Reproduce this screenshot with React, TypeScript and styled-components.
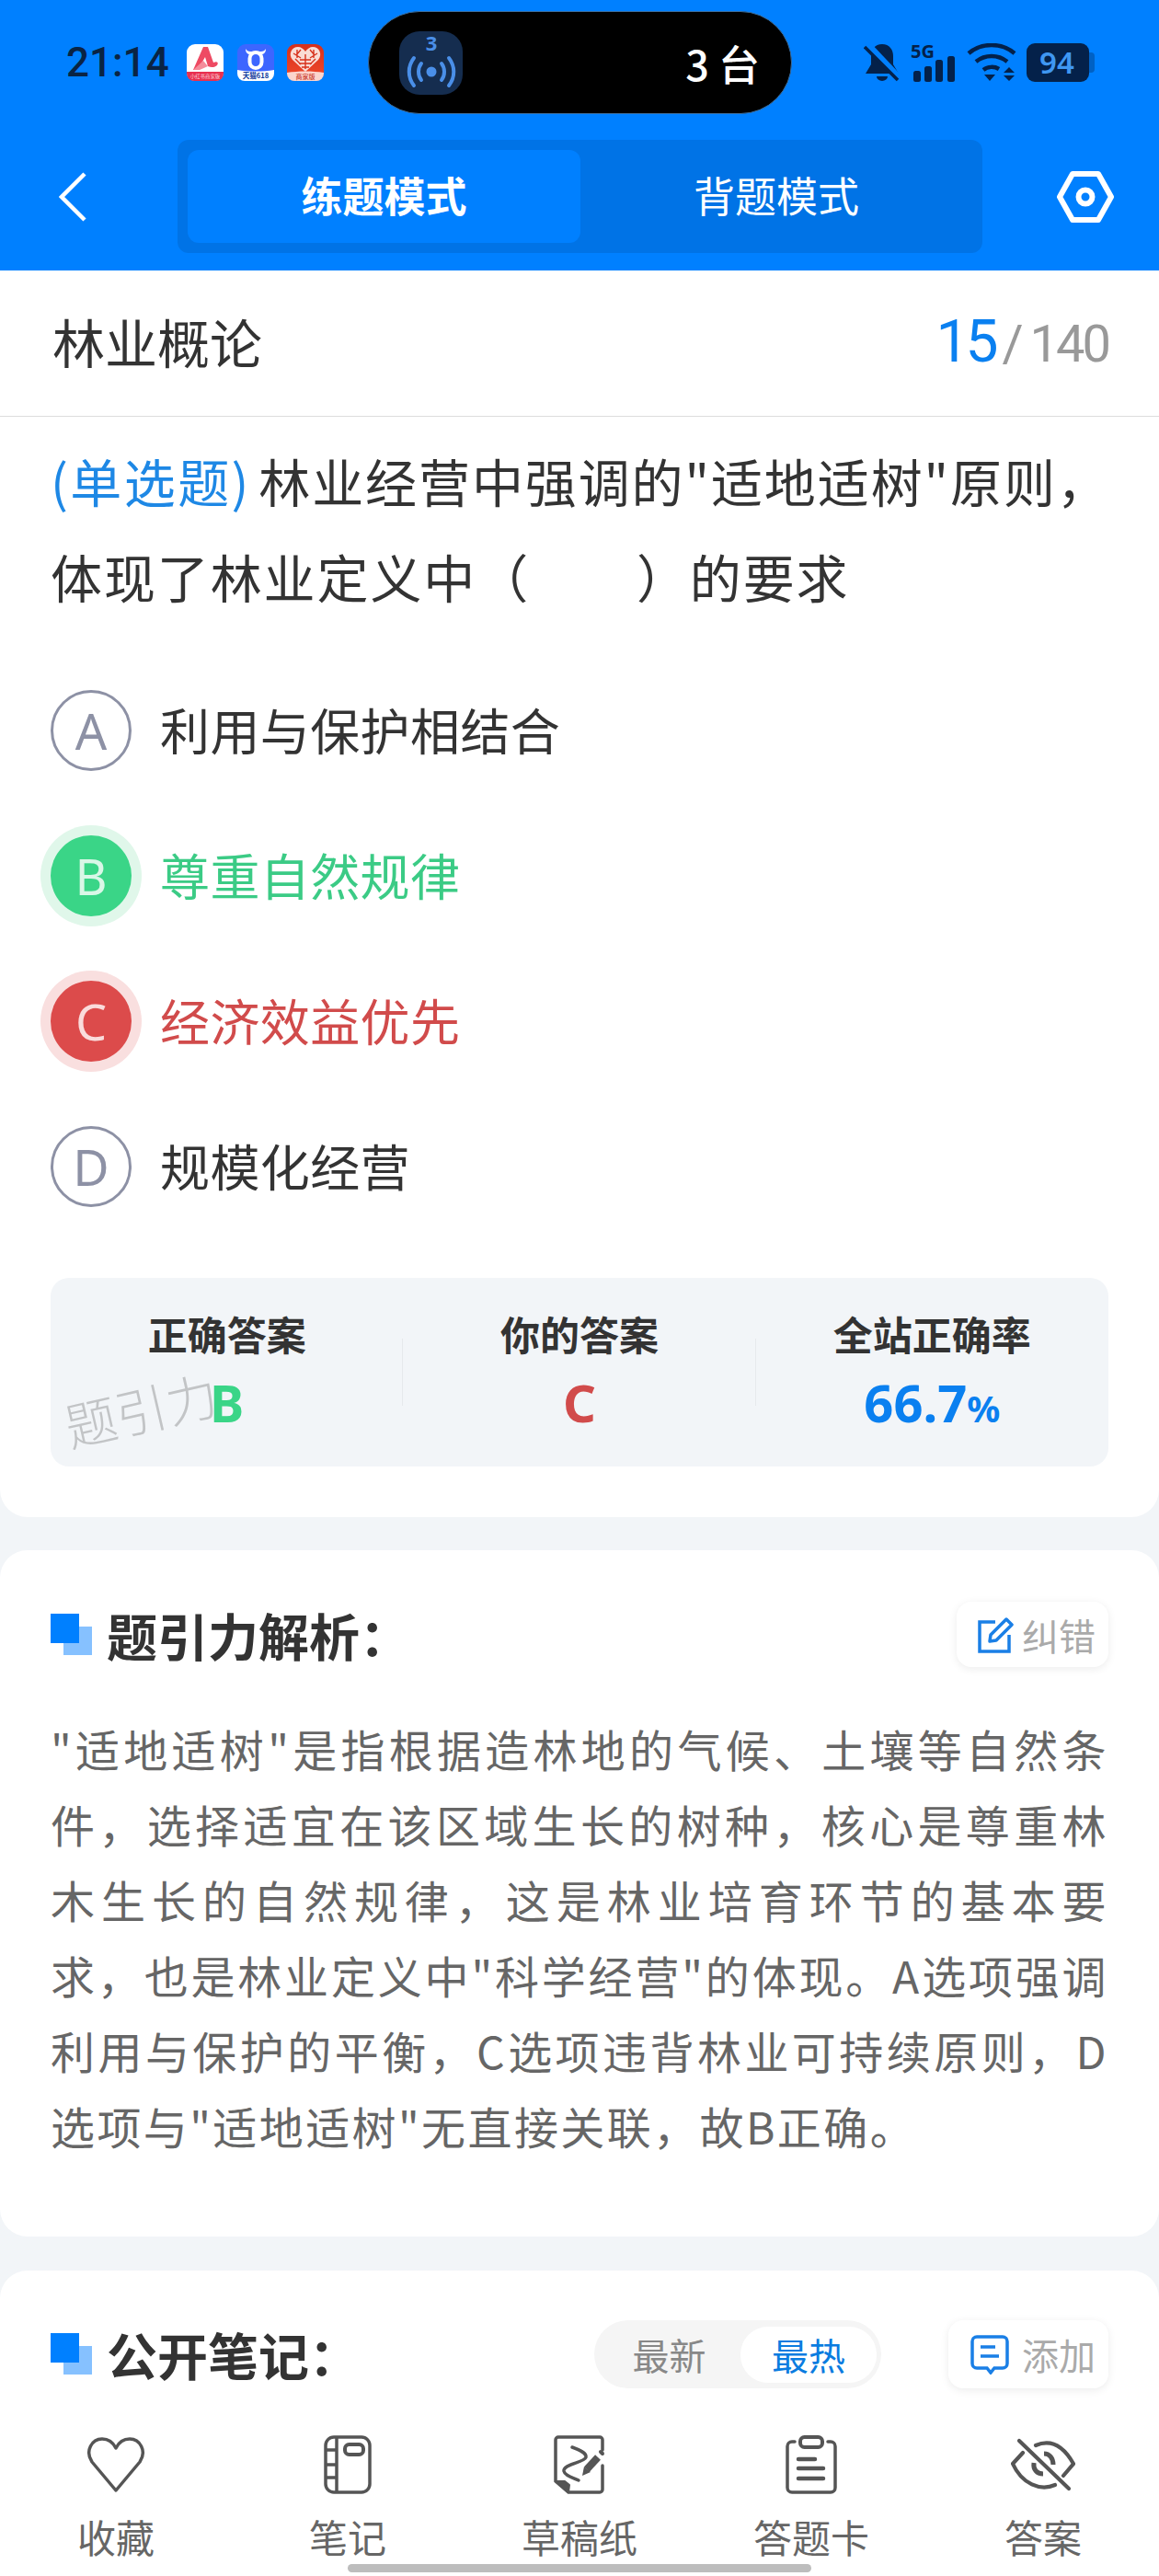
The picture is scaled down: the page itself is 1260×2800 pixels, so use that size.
import React from 'react'
import styled, { createGlobalStyle } from 'styled-components'

const GlobalStyle = createGlobalStyle`
  html, body {
    margin: 0;
    padding: 0;
    background: #f2f5f8;
    font-family: "Noto Sans CJK SC", "Noto Sans", sans-serif;
  }
  * { box-sizing: border-box; }
`

const Phone = styled.div`
  position: relative;
  width: 1260px;
  height: 2800px;
  display: flex;
  flex-direction: column;
  overflow: hidden;
  background: #f2f5f8;
`

const Header = styled.header`
  height: 294px;
  flex: none;
  background: #0080ff;
  display: flex;
  flex-direction: column;
`

const StatusBar = styled.div`
  height: 152px;
  padding: 12px 70px 28px 72px;
  display: flex;
  align-items: center;
  color: #0a2444;
`

const Clock = styled.span`
  width: 131px;
  font-size: 44px;
  font-weight: 500;
  font-family: Roboto, "Noto Sans", sans-serif;
`

const AppIcons = styled.div`
  width: 197px;
  display: flex;
  gap: 14.5px;
`

const Island = styled.div`
  width: 461px;
  height: 112px;
  border-radius: 56px;
  background: #000;
  border: 1px solid #3d6f9f;
  padding: 0 34px 0 33px;
  display: flex;
  align-items: center;
  justify-content: space-between;
  color: #fff;
  font-size: 45px;
  font-weight: 500;
`

const IslandBadge = styled.div`
  width: 69px;
  height: 69px;
  border-radius: 22px;
  background: #152d4f;
  display: flex;
  align-items: center;
  justify-content: center;
`

const StatusIcons = styled.div`
  margin-left: auto;
  display: flex;
  align-items: center;
  gap: 11px;
`

const Battery = styled.div`
  width: 74px;
  height: 42px;
  display: flex;
  align-items: center;
`

const BatteryBody = styled.div`
  width: 68px;
  height: 42px;
  border-radius: 9px;
  background: #04214a;
  color: #3f97f2;
  font-size: 33px;
  font-weight: 600;
  line-height: 42px;
  padding-left: 14px;
  font-family: "Noto Sans", sans-serif;
`

const BatteryTip = styled.div`
  width: 6px;
  height: 22px;
  background: #0061c4;
  border-radius: 0 4px 4px 0;
`

const NavBar = styled.div`
  height: 123px;
  padding: 0 49px 0 64px;
  display: flex;
  align-items: center;
`

const ModeSwitch = styled.div`
  width: 875px;
  height: 123px;
  margin: 0 auto 0 99px;
  padding: 11px;
  border-radius: 12px;
  background: #0073e6;
  display: flex;
`

const ModeTab = styled.div<{ $active?: boolean }>`
  width: ${p => (p.$active ? '427px' : '426px')};
  border-radius: 12px;
  background: ${p => (p.$active ? '#0080ff' : 'transparent')};
  color: #fff;
  font-size: 45px;
  font-weight: ${p => (p.$active ? 700 : 400)};
  display: flex;
  align-items: center;
  justify-content: center;
  padding-bottom: 4px;
`

const Card = styled.section<{ $top?: boolean }>`
  background: #fff;
  border-radius: ${p => (p.$top ? '0 0 30px 30px' : '30px')};
  flex: none;
`

const TitleRow = styled.div`
  height: 159px;
  padding: 0 55px 0 57px;
  border-bottom: 1px solid #dcdcdc;
  display: flex;
  align-items: center;
  justify-content: space-between;
`

const Subject = styled.h1`
  margin: 0 0 6px;
  font-size: 57px;
  font-weight: 400;
  color: #333;
`

const Progress = styled.div`
  display: flex;
  align-items: baseline;
  color: #999;
  font-size: 56px;
  letter-spacing: -3px;
  font-family: Roboto, "Noto Sans", sans-serif;
  margin-bottom: 4px;
`

const ProgressNow = styled.span`
  color: #0a80f0;
  font-size: 64px;
  letter-spacing: -4px;
  margin-right: 8px;
`

const ProgressSlash = styled.span`
  margin-right: 10px;
`

const QuestionBody = styled.div`
  padding: 17px 55px 55px;
`

const QuestionText = styled.p`
  margin: 0 0 72px;
  font-size: 56px;
  line-height: 104px;
  color: #333;
  letter-spacing: 1.9px;
  word-spacing: -6px;
  white-space: nowrap;
`

const QuestionType = styled.span`
  color: #1e88e5;
  letter-spacing: 2.4px;
`

const Options = styled.div`
  display: flex;
  flex-direction: column;
  gap: 70px;
  margin-bottom: 77px;
`

type Tone = 'plain' | 'right' | 'wrong'

const toneColor: Record<Tone, string> = {
  plain: '#333',
  right: '#3bcb85',
  wrong: '#d14b4b',
}

const OptionRow = styled.div<{ $tone: Tone }>`
  height: 88px;
  display: flex;
  align-items: center;
  gap: 31px;
  font-size: 54px;
  color: ${p => toneColor[p.$tone]};
`

const OptionText = styled.span`
  margin-top: -4px;
  letter-spacing: 0.4px;
`

const OptionMark = styled.div<{ $tone: Tone }>`
  width: 88px;
  height: 88px;
  flex: none;
  border-radius: 50%;
  font-size: 54px;
  font-family: "Noto Sans", sans-serif;
  display: flex;
  align-items: center;
  justify-content: center;
  color: ${p => (p.$tone === 'plain' ? '#8d91a5' : p.$tone === 'right' ? '#d9f7e7' : '#fadcdc')};
  background: ${p => (p.$tone === 'plain' ? '#fff' : p.$tone === 'right' ? '#3ad587' : '#dc4b4b')};
  border: ${p => (p.$tone === 'plain' ? '3px solid #8d91a5' : 'none')};
  box-shadow: ${p =>
    p.$tone === 'right' ? '0 0 0 11px #e0f7ea' : p.$tone === 'wrong' ? '0 0 0 11px #f9dfdf' : 'none'};
`

const Stats = styled.div`
  position: relative;
  height: 205px;
  border-radius: 20px;
  background: #f2f5f8;
  display: grid;
  grid-template-columns: repeat(3, 1fr);
`

const StatCell = styled.div<{ $divider?: boolean }>`
  position: relative;
  display: flex;
  flex-direction: column;
  align-items: center;
  padding-top: 30px;

  ${p =>
    p.$divider &&
    `&::after {
      content: '';
      position: absolute;
      right: 0;
      top: 66px;
      width: 1px;
      height: 73px;
      background: #e6e9ec;
    }`}
`

const StatLabel = styled.div`
  font-size: 43px;
  line-height: 60px;
  font-weight: 700;
  color: #333;
`

const StatValue = styled.div<{ $color: string }>`
  margin-top: 12px;
  font-size: 56px;
  line-height: 66px;
  font-weight: 700;
  font-family: "Noto Sans", sans-serif;
  color: ${p => p.$color};
`

const StatUnit = styled.span`
  font-size: 40px;
`

const Watermark = styled.div`
  position: absolute;
  left: 14px;
  top: 112px;
  font-size: 56px;
  font-weight: 300;
  line-height: 60px;
  color: #c2c4c6;
  transform: rotate(-13deg);
  white-space: nowrap;
`

const SectionCard = styled(Card)`
  margin-top: 36px;
  padding: 56px 55px 80px;
`

const NotesCard = styled(Card)`
  margin-top: 37px;
  padding: 55px 55px 0;
  flex: 1;
  border-radius: 30px 30px 0 0;
`

const SectionHead = styled.div`
  display: flex;
  align-items: center;
  height: 71px;
`

const TitleMark = styled.div`
  position: relative;
  width: 45px;
  height: 45px;
  margin-right: 16px;
  flex: none;
  background: linear-gradient(#86c1ff, #86c1ff) 14px 14px / 31px 31px no-repeat;

  &::before {
    content: '';
    position: absolute;
    left: 0;
    top: 0;
    width: 31px;
    height: 32px;
    background: #0080ff;
  }
`

const SectionTitle = styled.h2`
  margin: 0 0 2px;
  font-size: 55px;
  font-weight: 700;
  color: #333;
`

const SmallButton = styled.div`
  margin-left: auto;
  width: 165px;
  height: 71px;
  padding-right: 14px;
  border-radius: 16px;
  background: #fff;
  box-shadow: 0 2px 10px rgba(0, 0, 0, 0.08);
  display: flex;
  align-items: center;
  justify-content: flex-end;
  gap: 9px;
  color: #aaa;
  font-size: 40px;
`

const Analysis = styled.p`
  margin: 47px 0 0;
  font-size: 48px;
  line-height: 82px;
  color: #666;
  letter-spacing: 2.4px;
  text-align: justify;
`

const SortSwitch = styled.div`
  margin-left: auto;
  width: 312px;
  height: 74px;
  border-radius: 37px;
  background: #f5f5f5;
  padding: 7px 5px 6px 4px;
  display: flex;
  font-size: 40px;
`

const SortTab = styled.div<{ $active?: boolean }>`
  border-radius: 30px;
  display: flex;
  align-items: center;
  justify-content: center;
  width: ${p => (p.$active ? '148px' : '155px')};
  background: ${p => (p.$active ? '#fff' : 'transparent')};
  color: ${p => (p.$active ? '#0a7ce0' : '#888')};
`

const AddButton = styled(SmallButton)`
  margin-left: 73px;
  width: 174px;
  height: 74px;
  gap: 14px;
`

const BottomNav = styled.nav`
  position: absolute;
  left: 0;
  right: 0;
  bottom: 0;
  height: 190px;
  padding-top: 37px;
  background: #fff;
  display: grid;
  grid-template-columns: repeat(5, 252px);
`

const NavItem = styled.div`
  display: flex;
  flex-direction: column;
  align-items: center;
  color: #666;
  font-size: 42px;
  line-height: 58px;
`

const NavIcon = styled.div`
  height: 64px;
  margin-bottom: 17px;
  display: flex;
  align-items: center;
`

const HomeBar = styled.div`
  position: absolute;
  left: 378px;
  bottom: 4px;
  width: 504px;
  height: 9px;
  border-radius: 5px;
  background: #bdbdbd;
`

const iconColor = '#555'

function RedBookIcon() {
  return (
    <svg width="40" height="40" viewBox="0 0 40 40">
      <rect width="40" height="40" rx="9" fill="#fff" />
      <path d="M0 30h40v2a8 8 0 0 1-8 8H8a8 8 0 0 1-8-8z" fill="#e8304f" />
      <path d="M18 3h5l6 17c4-2 6 0 4 3-2 2-6 3-10 1l-3-10-8 14H7z" fill="#ee4a63" />
      <path d="M7 28l11-10 5 6-9 4z" fill="#f58c9b" />
      <text x="20" y="37" textAnchor="middle" fontSize="5.4" fill="#fbd3da" fontFamily="Noto Sans CJK SC">小红书商家版</text>
    </svg>
  )
}

function TmallIcon() {
  return (
    <svg width="40" height="40" viewBox="0 0 40 40">
      <rect width="40" height="40" rx="9" fill="#3d66ff" />
      <path d="M0 28c12 2 28 2 40 0v4a8 8 0 0 1-8 8H8a8 8 0 0 1-8-8z" fill="#fff" />
      <path d="M9 5c0 4 2 6 5 6h12c3 0 5-2 5-6-1 2-3 3-5 3H14c-2 0-4-1-5-3z" fill="#fff" />
      <rect x="13.5" y="9" width="13" height="17" rx="6.5" fill="none" stroke="#fff" strokeWidth="4" />
      <text x="20" y="37" textAnchor="middle" fontSize="7.6" fontWeight="700" fill="#123a9c" fontFamily="Noto Sans CJK SC">天猫618</text>
    </svg>
  )
}

function PinduoIcon() {
  return (
    <svg width="40" height="40" viewBox="0 0 40 40">
      <defs>
        <linearGradient id="pddBg" x1="0" y1="0" x2="0" y2="1">
          <stop offset="0" stopColor="#d7301b" />
          <stop offset="1" stopColor="#f04a2c" />
        </linearGradient>
      </defs>
      <rect width="40" height="40" rx="9" fill="url(#pddBg)" />
      <path d="M0 31c12-2 28-2 40 0v1a8 8 0 0 1-8 8H8a8 8 0 0 1-8-8z" fill="#fbd5cd" />
      <path d="M20 30 6 17C1 11 5 3 12 3c3 0 6 2 8 5 2-3 5-5 8-5 7 0 11 8 6 14z" fill="#f9dcd5" />
      <path
        d="M11 6v9M7 10l8 5M15 6l-5 6M29 6v9M33 10l-8 5M25 6l5 6M20 11v16M14 17h12M13 21l14 0M16 25h8M9 16l6 6M31 16l-6 6"
        stroke="#d7301b"
        strokeWidth="1.4"
        fill="none"
      />
      <text x="20" y="37.5" textAnchor="middle" fontSize="7" fontWeight="500" fill="#c93a2a" fontFamily="Noto Sans CJK SC">商家版</text>
    </svg>
  )
}

function BroadcastIcon() {
  return (
    <svg width="54" height="62" viewBox="0 0 54 62" fill="none" stroke="#4a8fe8" strokeWidth="4" strokeLinecap="round">
      <text x="27" y="18" textAnchor="middle" fontSize="22" fontWeight="700" fill="#4a8fe8" stroke="none" fontFamily="Noto Sans">3</text>
      <circle cx="27" cy="41" r="5.5" fill="#4a8fe8" stroke="none" />
      <path d="M16 32c-4 5-4 13 0 18M38 32c4 5 4 13 0 18M8 26c-7 9-7 21 0 30M46 26c7 9 7 21 0 30" />
    </svg>
  )
}

function BellOffIcon() {
  return (
    <svg width="40" height="42" viewBox="0 0 40 42">
      <path d="M20 1c8 0 12 6 12 13v9l6 10H2l6-10v-9C8 7 12 1 20 1z" fill="#04214a" />
      <path d="M14 36a6 5 0 0 0 12 0z" fill="#04214a" />
      <path d="M4 1l34 36" stroke="#0080ff" strokeWidth="7" />
      <path d="M1 4l36 36" stroke="#04214a" strokeWidth="3.5" />
    </svg>
  )
}

function SignalIcon() {
  return (
    <svg width="50" height="42" viewBox="0 0 50 42" fill="#04214a">
      <text x="0" y="16" fontSize="20" fontWeight="700" fontFamily="Noto Sans">5G</text>
      <rect x="3" y="30" width="8" height="12" rx="2.5" />
      <rect x="15" y="25" width="8" height="17" rx="2.5" />
      <rect x="27" y="18" width="8" height="24" rx="2.5" />
      <rect x="40" y="14" width="8" height="28" rx="2.5" />
    </svg>
  )
}

function WifiIcon() {
  return (
    <svg width="54" height="42" viewBox="0 0 54 42" fill="none" stroke="#04214a" strokeWidth="4.5">
      <path d="M2 11c14-12 36-12 50 0M10 20c10-8 24-8 34 0M18 29c5-4 12-4 17-1" />
      <path d="M19 34h12l-6 7z" fill="#04214a" stroke="none" />
      <path d="M46 26l6 6H40zM46 41l6-6H40z" fill="#04214a" stroke="none" />
    </svg>
  )
}

function BackIcon() {
  return (
    <svg width="30" height="54" viewBox="0 0 30 54" fill="none" stroke="#fff" strokeWidth="4.5">
      <path d="M28 2 3 27l25 25" />
    </svg>
  )
}

function HexIcon() {
  return (
    <svg width="62" height="56" viewBox="0 0 62 56" fill="none" stroke="#fff" strokeWidth="6" strokeLinejoin="round">
      <path d="M17 3h28l14 25-14 25H17L3 28z" />
      <circle cx="31" cy="28" r="7.5" />
    </svg>
  )
}

function PencilIcon() {
  return (
    <svg width="40" height="40" viewBox="0 0 40 40" fill="none" stroke="#1a7fe6" strokeWidth="3.5">
      <path d="M20 6H3v32h32V20" />
      <path d="M14 27l1-7L32 3l6 6-17 17z" strokeLinejoin="round" />
    </svg>
  )
}

function CommentIcon() {
  return (
    <svg width="42" height="44" viewBox="0 0 42 44" fill="none" stroke="#1a7fe6" strokeWidth="3.5">
      <path d="M7 3h28a5 5 0 0 1 5 5v24a5 5 0 0 1-5 5h-9l-4 5-4-5H7a5 5 0 0 1-5-5V8a5 5 0 0 1 5-5z" />
      <path d="M11 14h16M11 24h20" />
    </svg>
  )
}

function HeartIcon() {
  return (
    <svg width="64" height="62" viewBox="0 0 64 62" fill="none" stroke={iconColor} strokeWidth="3.5" strokeLinejoin="round">
      <path d="M32 59 6 28C-2 16 6 3 17 3c7 0 12 4 15 10 3-6 8-10 15-10 11 0 19 13 11 25z" />
    </svg>
  )
}

function NotebookIcon() {
  return (
    <svg width="52" height="64" viewBox="0 0 52 64" fill="none" stroke={iconColor} strokeWidth="3.5">
      <rect x="2" y="2" width="48" height="60" rx="9" />
      <path d="M14 2v60M2 16h12M2 32h12M2 46h12" />
      <rect x="23" y="10" width="20" height="11" rx="4.5" strokeWidth="4" />
    </svg>
  )
}

function DraftIcon() {
  return (
    <svg width="56" height="64" viewBox="0 0 56 64" fill="none" stroke={iconColor} strokeWidth="3.5" strokeLinecap="round">
      <path d="M53 16V5a3 3 0 0 0-3-3H5a3 3 0 0 0-3 3v45l14 12h34a3 3 0 0 0 3-3V33" />
      <path d="M2 50h10l5 4-1 8z" fill={iconColor} strokeLinejoin="round" strokeWidth="2" />
      <path d="M20 13c8 3 16 6 15 11-2 6-25 7-24 15 1 5 10 7 16 10" />
      <path d="M48 24 36 37" strokeWidth="8" strokeLinecap="butt" />
      <path d="M33 34l-2 10 9-4z" fill={iconColor} stroke="none" />
      <path d="M53 20l-2-2" strokeWidth="4" />
    </svg>
  )
}

function ClipboardIcon() {
  return (
    <svg width="56" height="64" viewBox="0 0 56 64" fill="none" stroke={iconColor} strokeWidth="3.5" strokeLinecap="round">
      <path d="M10 7H7a5 5 0 0 0-5 5v45a5 5 0 0 0 5 5h42a5 5 0 0 0 5-5V12a5 5 0 0 0-5-5h-3" />
      <rect x="16" y="2" width="24" height="11" rx="4.5" strokeWidth="4" />
      <path d="M14 26h18M14 36h27M14 47h27" strokeWidth="4.5" />
    </svg>
  )
}

function EyeOffIcon() {
  return (
    <svg width="70" height="58" viewBox="0 0 70 58" fill="none" stroke={iconColor} strokeWidth="4.2" strokeLinecap="round">
      <path d="M9 3 63 55" />
      <path d="M27 8c14-6 28-3 41 20l-11 13" />
      <path d="M13 16 2 28c10 22 30 30 46 23" />
      <path d="M36 17c6 0 10 5 10 12" strokeWidth="5" strokeLinecap="butt" />
      <path d="M25 27c-1 7 3 12 10 12" strokeWidth="5" strokeLinecap="butt" />
    </svg>
  )
}

export default function App() {
  return (
    <Phone>
      <GlobalStyle />
      <Header>
        <StatusBar>
          <Clock>21:14</Clock>
          <AppIcons>
            <RedBookIcon />
            <TmallIcon />
            <PinduoIcon />
          </AppIcons>
          <Island>
            <IslandBadge>
              <BroadcastIcon />
            </IslandBadge>
            <span>3 台</span>
          </Island>
          <StatusIcons>
            <BellOffIcon />
            <SignalIcon />
            <WifiIcon />
            <Battery>
              <BatteryBody>94</BatteryBody>
              <BatteryTip />
            </Battery>
          </StatusIcons>
        </StatusBar>
        <NavBar>
          <BackIcon />
          <ModeSwitch>
            <ModeTab $active>练题模式</ModeTab>
            <ModeTab>背题模式</ModeTab>
          </ModeSwitch>
          <HexIcon />
        </NavBar>
      </Header>

      <Card $top>
        <TitleRow>
          <Subject>林业概论</Subject>
          <Progress>
            <ProgressNow>15</ProgressNow>
            <ProgressSlash>/</ProgressSlash>140
          </Progress>
        </TitleRow>
        <QuestionBody>
          <QuestionText>
            <QuestionType>(单选题)</QuestionType> 林业经营中强调的"适地适树"原则，
            <br />
            体现了林业定义中（　　）的要求
          </QuestionText>
          <Options>
            <OptionRow $tone="plain">
              <OptionMark $tone="plain">A</OptionMark>
              <OptionText>利用与保护相结合</OptionText>
            </OptionRow>
            <OptionRow $tone="right">
              <OptionMark $tone="right">B</OptionMark>
              <OptionText>尊重自然规律</OptionText>
            </OptionRow>
            <OptionRow $tone="wrong">
              <OptionMark $tone="wrong">C</OptionMark>
              <OptionText>经济效益优先</OptionText>
            </OptionRow>
            <OptionRow $tone="plain">
              <OptionMark $tone="plain">D</OptionMark>
              <OptionText>规模化经营</OptionText>
            </OptionRow>
          </Options>
          <Stats>
            <StatCell $divider>
              <StatLabel>正确答案</StatLabel>
              <StatValue $color="#3ad587">B</StatValue>
            </StatCell>
            <StatCell $divider>
              <StatLabel>你的答案</StatLabel>
              <StatValue $color="#d14b4b">C</StatValue>
            </StatCell>
            <StatCell>
              <StatLabel>全站正确率</StatLabel>
              <StatValue $color="#0a80f0">
                66.7<StatUnit>%</StatUnit>
              </StatValue>
            </StatCell>
            <Watermark>题引力</Watermark>
          </Stats>
        </QuestionBody>
      </Card>

      <SectionCard>
        <SectionHead>
          <TitleMark />
          <SectionTitle>题引力解析：</SectionTitle>
          <SmallButton>
            <PencilIcon />
            纠错
          </SmallButton>
        </SectionHead>
        <Analysis>
          "适地适树"是指根据造林地的气候、土壤等自然条件，选择适宜在该区域生长的树种，核心是尊重林木生长的自然规律，这是林业培育环节的基本要求，也是林业定义中"科学经营"的体现。A选项强调利用与保护的平衡，C选项违背林业可持续原则，D选项与"适地适树"无直接关联，故B正确。
        </Analysis>
      </SectionCard>

      <NotesCard>
        <SectionHead>
          <TitleMark />
          <SectionTitle>公开笔记：</SectionTitle>
          <SortSwitch>
            <SortTab>最新</SortTab>
            <SortTab $active>最热</SortTab>
          </SortSwitch>
          <AddButton>
            <CommentIcon />
            添加
          </AddButton>
        </SectionHead>
      </NotesCard>

      <BottomNav>
        <NavItem>
          <NavIcon>
            <HeartIcon />
          </NavIcon>
          收藏
        </NavItem>
        <NavItem>
          <NavIcon>
            <NotebookIcon />
          </NavIcon>
          笔记
        </NavItem>
        <NavItem>
          <NavIcon>
            <DraftIcon />
          </NavIcon>
          草稿纸
        </NavItem>
        <NavItem>
          <NavIcon>
            <ClipboardIcon />
          </NavIcon>
          答题卡
        </NavItem>
        <NavItem>
          <NavIcon>
            <EyeOffIcon />
          </NavIcon>
          答案
        </NavItem>
      </BottomNav>
      <HomeBar />
    </Phone>
  )
}
